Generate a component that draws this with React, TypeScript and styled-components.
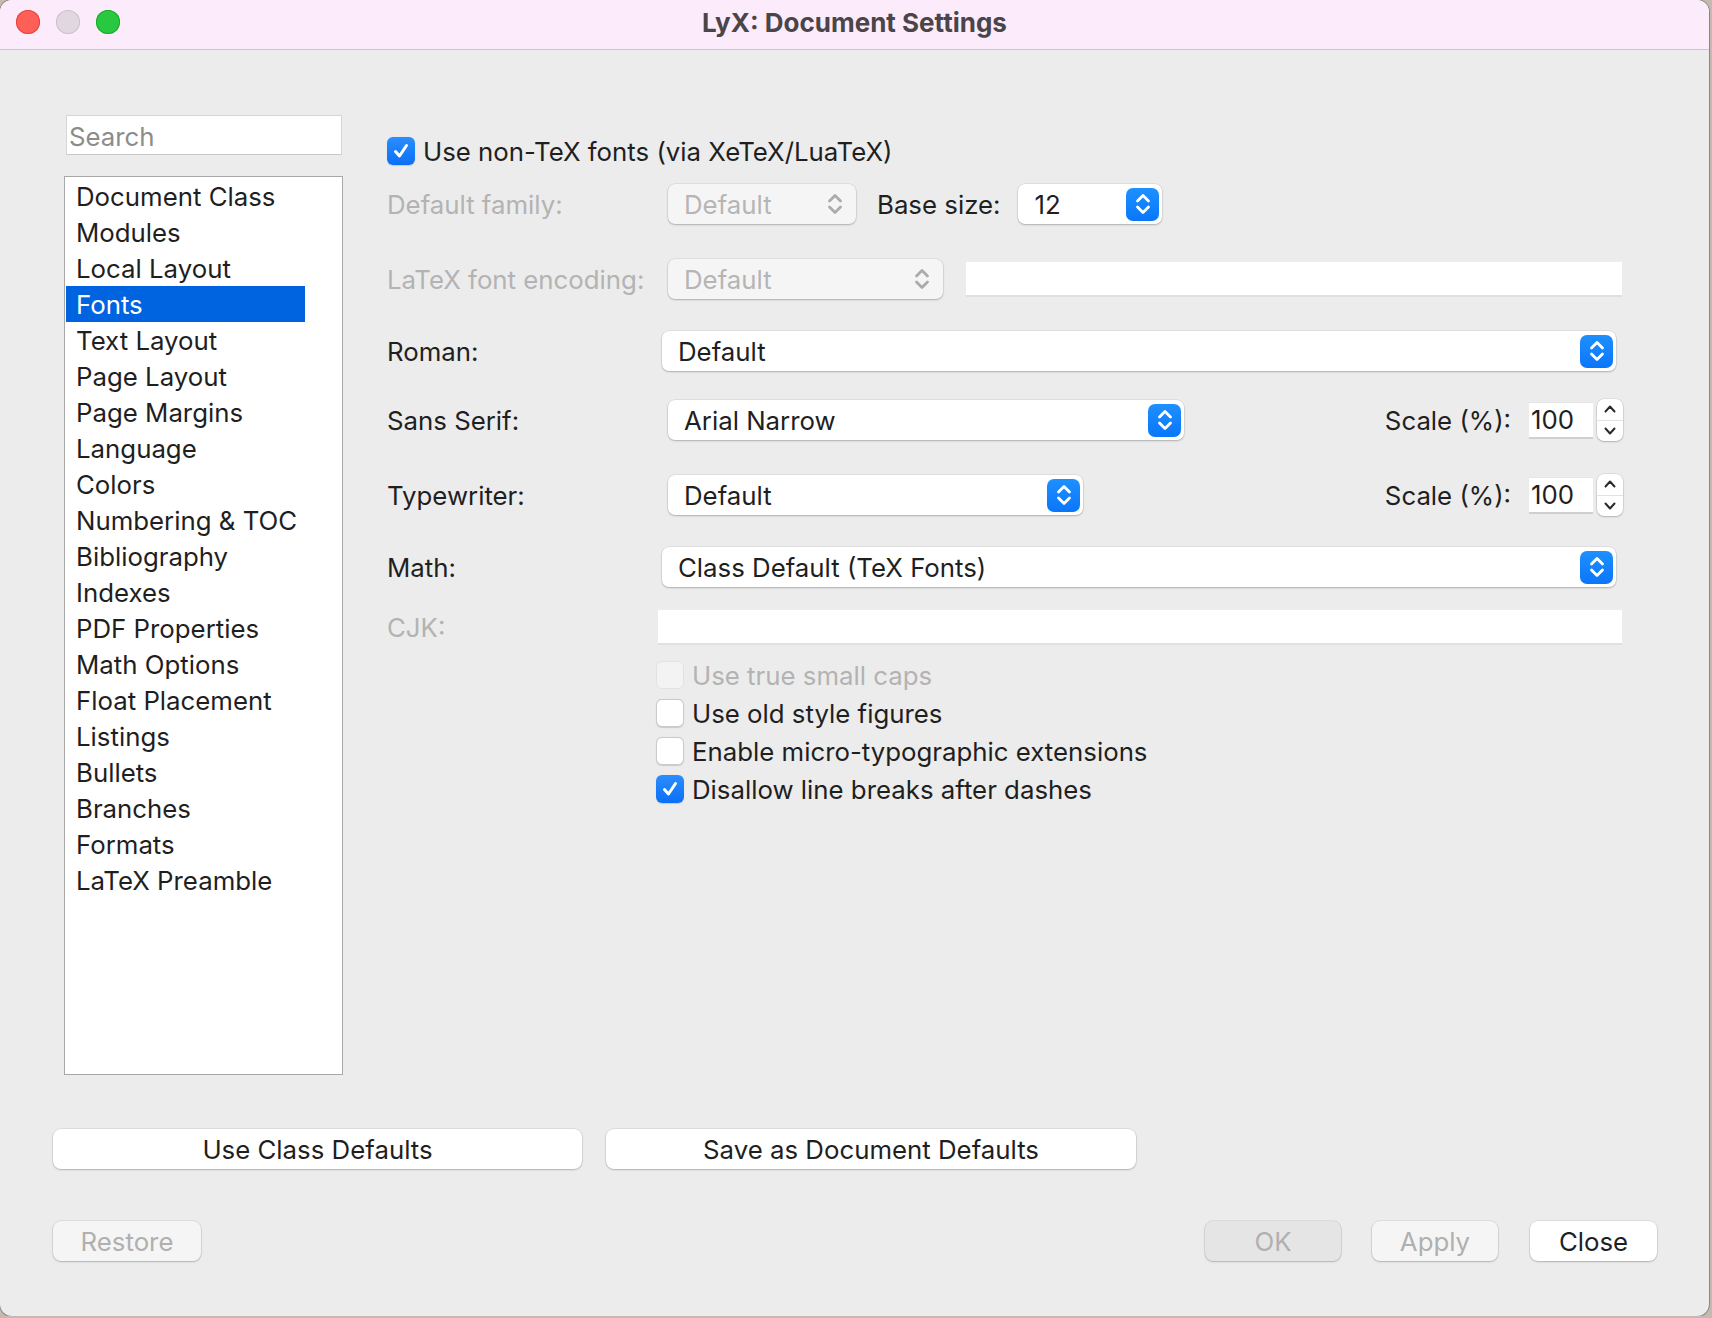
import React from "react";
import styled, { createGlobalStyle } from "styled-components";

const FONT = "25.8px";

const GlobalStyle = createGlobalStyle`
  html, body {
    margin: 0;
    padding: 0;
  }
  body {
    background: #c4bab0;
    font-family: Inter, "Helvetica Neue", "Liberation Sans", Arial, sans-serif;
    color: #1f1f1f;
  }
`;

const Window = styled.div`
  width: 1709px;
  height: 1316px;
  background: #ececec;
  border-radius: 12px;
  overflow: hidden;
  box-shadow: 0 0 0 1px rgba(0, 0, 0, 0.28);
  display: flex;
  flex-direction: column;
`;

const TitleBar = styled.div`
  height: 50px;
  flex-shrink: 0;
  box-sizing: border-box;
  padding-bottom: 5px;
  background: #fcebfb;
  border-bottom: 1px solid #cbc6cb;
  display: grid;
  grid-template-columns: 1fr auto 1fr;
  align-items: center;
`;

const Lights = styled.div`
  display: flex;
  gap: 16px;
  padding-left: 16px;
`;

const Light = styled.span<{ $color: string; $edge: string }>`
  width: 24px;
  height: 24px;
  border-radius: 50%;
  background: ${(p) => p.$color};
  box-shadow: inset 0 0 0 1px ${(p) => p.$edge};
`;

const Title = styled.div`
  font-size: 26px;
  font-weight: 700;
  color: #4a4548;
`;

const Body = styled.div`
  flex: 1;
  display: flex;
  flex-direction: column;
`;

const Top = styled.div`
  display: flex;
  align-items: flex-start;
  margin-top: 65px;
`;

const Sidebar = styled.div`
  margin-left: 64px;
  width: 279px;
  display: flex;
  flex-direction: column;
`;

const Search = styled.div`
  height: 40px;
  margin: 0 1px 0 2px;
  box-sizing: border-box;
  background: #fff;
  border: 1px solid #d6d6d6;
  border-bottom-color: #c8c8c8;
  display: flex;
  align-items: center;
  padding: 2px 0 0 2px;
  font-size: ${FONT};
  color: #8c8c8c;
`;

const List = styled.div`
  margin-top: 21px;
  height: 899px;
  box-sizing: border-box;
  background: #fff;
  border: 1px solid #a8a8a8;
  padding-top: 1px;
`;

const Item = styled.div<{ $selected?: boolean }>`
  height: 36px;
  width: 229px;
  margin-left: 1px;
  padding-left: 10px;
  display: flex;
  align-items: center;
  font-size: ${FONT};
  background: ${(p) => (p.$selected ? "#0064e1" : "transparent")};
  color: ${(p) => (p.$selected ? "#fff" : "#1f1f1f")};
`;

const Panel = styled.div`
  margin-left: 44px;
  margin-top: 14px;
  width: 1236px;
  display: flex;
  flex-direction: column;
`;

const Row = styled.div<{ $h: number }>`
  height: ${(p) => p.$h}px;
  display: flex;
  align-items: center;
`;

const Label = styled.div<{ $disabled?: boolean; $w?: number; $ml?: number }>`
  width: ${(p) => (p.$w ? `${p.$w}px` : "auto")};
  margin-left: ${(p) => p.$ml ?? 0}px;
  flex-shrink: 0;
  font-size: ${FONT};
  color: ${(p) => (p.$disabled ? "#b3b3b3" : "#1f1f1f")};
`;

const Combo = styled.div<{
  $w?: number;
  $disabled?: boolean;
  $ml?: number;
  $mr?: number;
}>`
  height: 40px;
  box-sizing: border-box;
  flex: ${(p) => (p.$w ? `0 0 ${p.$w}px` : "1")};
  margin-left: ${(p) => p.$ml ?? 0}px;
  margin-right: ${(p) => p.$mr ?? 0}px;
  display: flex;
  align-items: center;
  justify-content: space-between;
  padding: 0 3px 0 16px;
  border-radius: 7px;
  background: ${(p) => (p.$disabled ? "#f5f5f5" : "#fff")};
  box-shadow: 0 0 0 0.5px rgba(0, 0, 0, 0.1), 0 1px 2px rgba(0, 0, 0, 0.22);
  color: ${(p) => (p.$disabled ? "#b5b5b5" : "#1f1f1f")};
  font-size: ${FONT};
`;

const ComboButton = styled.div`
  width: 33px;
  height: 33px;
  border-radius: 7px;
  background: linear-gradient(#1e90ff, #0a76fa);
  display: flex;
  align-items: center;
  justify-content: center;
`;

const PlainArrows = styled.div`
  width: 33px;
  height: 33px;
  margin-right: 2px;
  display: flex;
  align-items: center;
  justify-content: center;
`;

const Field = styled.div<{ $ml?: number }>`
  flex: 1;
  height: 36px;
  margin-left: ${(p) => p.$ml ?? 0}px;
  margin-right: 1px;
  box-sizing: border-box;
  background: #fff;
  border-top: 1px solid #eeeeee;
  border-bottom: 2px solid #e0e0e0;
`;

const ScaleGroup = styled.div`
  margin-left: auto;
  display: flex;
  align-items: center;
`;

const SpinText = styled.div`
  width: 64px;
  height: 37px;
  margin-left: 18px;
  box-sizing: border-box;
  background: #fff;
  border-top: 1px solid #e6e6e6;
  border-bottom: 2px solid #cfcfcf;
  font-size: ${FONT};
  padding-left: 2px;
  display: flex;
  align-items: center;
`;

const Stepper = styled.div`
  width: 26px;
  height: 42px;
  margin-left: 4px;
  border-radius: 7px;
  background: #fff;
  box-shadow: 0 0 0 0.5px rgba(0, 0, 0, 0.12), 0 1px 2px rgba(0, 0, 0, 0.2);
  display: flex;
  flex-direction: column;
`;

const StepHalf = styled.div<{ $top?: boolean }>`
  flex: 1;
  display: flex;
  align-items: center;
  justify-content: center;
  border-bottom: ${(p) => (p.$top ? "1px solid #e2e2e2" : "none")};
`;

const Checks = styled.div`
  margin-top: 7px;
  margin-left: 269px;
  display: flex;
  flex-direction: column;
`;

const CheckRow = styled.div<{ $disabled?: boolean; $h?: number }>`
  height: ${(p) => p.$h ?? 38}px;
  display: flex;
  align-items: center;
  gap: 8px;
  font-size: ${FONT};
  color: ${(p) => (p.$disabled ? "#b3b3b3" : "#1f1f1f")};
`;

const Box = styled.span<{ $checked?: boolean; $disabled?: boolean }>`
  width: 28px;
  height: 28px;
  box-sizing: border-box;
  border-radius: 6px;
  flex-shrink: 0;
  display: flex;
  align-items: center;
  justify-content: center;
  background: ${(p) =>
    p.$checked
      ? "linear-gradient(#2b8dff, #0a70f5)"
      : p.$disabled
      ? "#f3f3f3"
      : "#fff"};
  border: ${(p) =>
    p.$checked
      ? "none"
      : p.$disabled
      ? "1px solid #e2e2e2"
      : "1px solid #cbcbcb"};
  box-shadow: ${(p) =>
    p.$disabled ? "none" : "0 0.5px 1px rgba(0, 0, 0, 0.15)"};
`;

const ButtonRow = styled.div<{ $mt: number }>`
  display: flex;
  align-items: center;
  margin-top: ${(p) => p.$mt}px;
  padding: 0 52px 0 53px;
`;

const Button = styled.div<{ $w: number; $ml?: number; $tone?: "white" | "dim" | "dark" }>`
  width: ${(p) => p.$w}px;
  height: 40px;
  margin-left: ${(p) => p.$ml ?? 0}px;
  box-sizing: border-box;
  border-radius: 8px;
  display: flex;
  align-items: center;
  justify-content: center;
  font-size: ${FONT};
  background: ${(p) =>
    p.$tone === "dim" ? "#f5f5f5" : p.$tone === "dark" ? "#e5e5e5" : "#fff"};
  color: ${(p) => (p.$tone && p.$tone !== "white" ? "#b0b0b0" : "#1f1f1f")};
  box-shadow: 0 0 0 0.5px rgba(0, 0, 0, 0.12), 0 1px 2px rgba(0, 0, 0, 0.2);
`;

const Spacer = styled.div`
  flex: 1;
`;

function UpDown({ color }: { color: string }) {
  return (
    <svg width="16" height="26" viewBox="0 0 16 26">
      <path
        d="M2.5 10 L8 4.5 L13.5 10 M2.5 16 L8 21.5 L13.5 16"
        fill="none"
        stroke={color}
        strokeWidth="2.8"
        strokeLinecap="round"
        strokeLinejoin="round"
      />
    </svg>
  );
}

function Chevron({ up }: { up?: boolean }) {
  return (
    <svg width="14" height="10" viewBox="0 0 14 10">
      <path
        d={up ? "M2.5 7.5 L7 2.5 L11.5 7.5" : "M2.5 2.5 L7 7.5 L11.5 2.5"}
        fill="none"
        stroke="#2a2a2a"
        strokeWidth="2"
        strokeLinecap="round"
        strokeLinejoin="round"
      />
    </svg>
  );
}

function Tick() {
  return (
    <svg width="20" height="20" viewBox="0 0 20 20">
      <path
        d="M4.5 10.5 L8.5 15 L15.5 4.5"
        fill="none"
        stroke="#fff"
        strokeWidth="3"
        strokeLinecap="round"
        strokeLinejoin="round"
      />
    </svg>
  );
}

function Select({
  value,
  w,
  ml,
  mr,
  disabled,
}: {
  value: string;
  w?: number;
  ml?: number;
  mr?: number;
  disabled?: boolean;
}) {
  return (
    <Combo $w={w} $ml={ml} $mr={mr} $disabled={disabled}>
      <span>{value}</span>
      {disabled ? (
        <PlainArrows>
          <UpDown color="#ababab" />
        </PlainArrows>
      ) : (
        <ComboButton>
          <UpDown color="#fff" />
        </ComboButton>
      )}
    </Combo>
  );
}

function Scale() {
  return (
    <ScaleGroup>
      <Label>Scale (%):</Label>
      <SpinText>100</SpinText>
      <Stepper>
        <StepHalf $top>
          <Chevron up />
        </StepHalf>
        <StepHalf>
          <Chevron />
        </StepHalf>
      </Stepper>
    </ScaleGroup>
  );
}

const sections = [
  "Document Class",
  "Modules",
  "Local Layout",
  "Fonts",
  "Text Layout",
  "Page Layout",
  "Page Margins",
  "Language",
  "Colors",
  "Numbering & TOC",
  "Bibliography",
  "Indexes",
  "PDF Properties",
  "Math Options",
  "Float Placement",
  "Listings",
  "Bullets",
  "Branches",
  "Formats",
  "LaTeX Preamble",
];

const options = [
  { text: "Use true small caps", disabled: true },
  { text: "Use old style figures" },
  { text: "Enable micro-typographic extensions" },
  { text: "Disallow line breaks after dashes", checked: true },
];

export default function App() {
  return (
    <>
      <GlobalStyle />
      <Window>
        <TitleBar>
          <Lights>
            <Light $color="#fe5f57" $edge="#e2463f" />
            <Light $color="#e0d7e0" $edge="#cbc2cb" />
            <Light $color="#28c840" $edge="#1aab29" />
          </Lights>
          <Title>LyX: Document Settings</Title>
          <span />
        </TitleBar>
        <Body>
          <Top>
            <Sidebar>
              <Search>Search</Search>
              <List>
                {sections.map((s) => (
                  <Item key={s} $selected={s === "Fonts"}>
                    {s}
                  </Item>
                ))}
              </List>
            </Sidebar>
            <Panel>
              <Row $h={44}>
                <CheckRow $h={44}>
                  <Box $checked>
                    <Tick />
                  </Box>
                  Use non-TeX fonts (via XeTeX/LuaTeX)
                </CheckRow>
              </Row>
              <Row $h={62}>
                <Label $disabled $w={275}>
                  Default family:
                </Label>
                <Select value="Default" w={188} ml={6} disabled />
                <Label $ml={21}>Base size:</Label>
                <Select value="12" w={144} ml={18} />
              </Row>
              <Row $h={88}>
                <Label $disabled $w={275}>
                  LaTeX font encoding:
                </Label>
                <Select value="Default" w={275} ml={6} disabled />
                <Field $ml={23} />
              </Row>
              <Row $h={56}>
                <Label $w={275}>Roman:</Label>
                <Select value="Default" mr={7} />
              </Row>
              <Row $h={82}>
                <Label $w={275}>Sans Serif:</Label>
                <Select value="Arial Narrow" w={516} ml={6} />
                <Scale />
              </Row>
              <Row $h={68}>
                <Label $w={275}>Typewriter:</Label>
                <Select value="Default" w={415} ml={6} />
                <Scale />
              </Row>
              <Row $h={76}>
                <Label $w={275}>Math:</Label>
                <Select value="Class Default (TeX Fonts)" mr={7} />
              </Row>
              <Row $h={44}>
                <Label $disabled $w={275}>
                  CJK:
                </Label>
                <Field $ml={-4} />
              </Row>
              <Checks>
                {options.map((o) => (
                  <CheckRow key={o.text} $disabled={o.disabled}>
                    <Box $checked={o.checked} $disabled={o.disabled}>
                      {o.checked && <Tick />}
                    </Box>
                    {o.text}
                  </CheckRow>
                ))}
              </Checks>
            </Panel>
          </Top>
          <ButtonRow $mt={54}>
            <Button $w={529}>Use Class Defaults</Button>
            <Button $w={530} $ml={24}>
              Save as Document Defaults
            </Button>
          </ButtonRow>
          <ButtonRow $mt={52}>
            <Button $w={148} $tone="dim">
              Restore
            </Button>
            <Spacer />
            <Button $w={136} $tone="dark">
              OK
            </Button>
            <Button $w={126} $ml={31} $tone="dim">
              Apply
            </Button>
            <Button $w={127} $ml={32}>
              Close
            </Button>
          </ButtonRow>
        </Body>
      </Window>
    </>
  );
}
